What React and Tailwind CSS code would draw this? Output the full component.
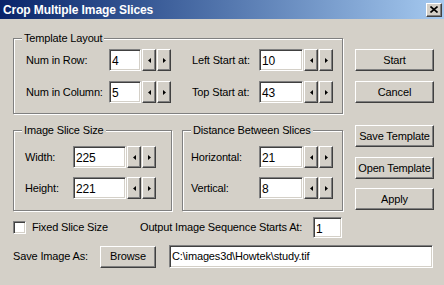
const raised =
  'bg-[#d4d0c8] border border-t-white border-l-white border-r-[#404040] border-b-[#404040] shadow-[inset_-1px_-1px_0_#808080]';
const sunken =
  'bg-white border border-t-[#808080] border-l-[#808080] border-r-white border-b-white shadow-[inset_1px_1px_0_#404040,inset_-1px_-1px_0_#d4d0c8]';

function Arrow({ dir }) {
  return (
    <svg width="3" height="5" viewBox="0 0 3 5" className="block">
      {dir === 'left' ? <polygon points="3,0 3,5 0,2.5" fill="#000" /> : <polygon points="0,0 0,5 3,2.5" fill="#000" />}
    </svg>
  );
}

function Spin({ value, w }) {
  return (
    <div className="flex h-[22px]">
      <div className={`${sunken} ${w} flex items-start pl-[2px] pt-[2px] text-[12px]`}>{value}</div>
      <button className={`${raised} ml-[1px] w-[14px] flex items-center justify-center`}>
        <Arrow dir="left" />
      </button>
      <button className={`${raised} ml-[1px] w-[14px] flex items-center justify-center`}>
        <Arrow dir="right" />
      </button>
    </div>
  );
}

function Group({ title, className, children }) {
  return (
    <div className={`relative border border-[#808080] shadow-[1px_1px_0_#fff,inset_1px_1px_0_#fff] ${className}`}>
      <span className="absolute -top-[8px] left-[8px] bg-[#d4d0c8] px-[2px] leading-[14px]">{title}</span>
      {children}
    </div>
  );
}

function Btn({ children, className = '' }) {
  return (
    <button className={`${raised} h-[22px] flex items-center justify-center ${className}`}>{children}</button>
  );
}

export default function App() {
  return (
    <div className="w-[444px] h-[285px] bg-[#d4d0c8] text-black text-[11px] tracking-[-0.15px] font-['Liberation_Sans',Arial,sans-serif] overflow-hidden">
      <div className="h-[19px] flex items-center justify-between pl-[3px] pr-[2px] bg-gradient-to-r from-[#0a246a] to-[#a6caf0]">
        <span className="text-white font-bold text-[12px] tracking-[-0.1px]">Crop Multiple Image Slices</span>
        <button className={`${raised} w-[16px] h-[14px] flex items-center justify-center`}>
          <svg width="8" height="7" viewBox="0 0 8 7">
            <path d="M0.5 0.5 L7.5 6.5 M7.5 0.5 L0.5 6.5" stroke="#000" strokeWidth="1.6" />
          </svg>
        </button>
      </div>

      <div className="pl-[13px]">
        <div className="flex">
          <div className="w-[330px]">
            <Group title="Template Layout" className="mt-[19px] pt-[10px] pb-[10px] pl-[12px]">
              <div className="flex flex-col gap-[10px]">
                <div className="flex items-center">
                  <span className="w-[83px]">Num in Row:</span>
                  <Spin value="4" w="w-[32px]" />
                  <span className="ml-[21px] w-[67px]">Left Start at:</span>
                  <Spin value="10" w="w-[44px]" />
                </div>
                <div className="flex items-center">
                  <span className="w-[83px]">Num in Column:</span>
                  <Spin value="5" w="w-[32px]" />
                  <span className="ml-[21px] w-[67px]">Top Start at:</span>
                  <Spin value="43" w="w-[44px]" />
                </div>
              </div>
            </Group>

            <div className="flex mt-[16px] gap-[10px]">
              <Group title="Image Slice Size" className="w-[159px] pt-[15px] pb-[11px] pl-[11px]">
                <div className="flex flex-col gap-[9px]">
                  <div className="flex items-center">
                    <span className="w-[48px]">Width:</span>
                    <Spin value="225" w="w-[53px]" />
                  </div>
                  <div className="flex items-center">
                    <span className="w-[48px]">Height:</span>
                    <Spin value="221" w="w-[53px]" />
                  </div>
                </div>
              </Group>
              <Group title="Distance Between Slices" className="w-[161px] pt-[15px] pb-[11px] pl-[8px]">
                <div className="flex flex-col gap-[9px]">
                  <div className="flex items-center">
                    <span className="w-[68px]">Horizontal:</span>
                    <Spin value="21" w="w-[44px]" />
                  </div>
                  <div className="flex items-center">
                    <span className="w-[68px]">Vertical:</span>
                    <Spin value="8" w="w-[44px]" />
                  </div>
                </div>
              </Group>
            </div>
          </div>

          <div className="ml-[12px] w-[79px] pt-[30px] flex flex-col">
            <Btn>Start</Btn>
            <Btn className="mt-[10px]">Cancel</Btn>
            <Btn className="mt-[22px]">Save Template</Btn>
            <Btn className="mt-[10px]">Open Template</Btn>
            <Btn className="mt-[9px]">Apply</Btn>
          </div>
        </div>

        <div className="flex items-center mt-[6px] h-[21px]">
          <div className={`${sunken} w-[13px] h-[13px]`} />
          <span className="ml-[6px] w-[108px]">Fixed Slice Size</span>
          <span className="w-[173px]">Output Image Sequence Starts At:</span>
          <div className={`${sunken} w-[29px] h-[21px] flex items-start pt-[2px] pl-[2px] text-[12px]`}>1</div>
        </div>

        <div className="flex items-center mt-[7px]">
          <span className="w-[87px]">Save Image As:</span>
          <Btn className="w-[56px] shadow-[inset_-1px_-1px_0_#808080,0_0_0_1px_#000]">Browse</Btn>
          <div className={`${sunken} ml-[13px] w-[264px] h-[23px] flex items-center pl-[2px]`}>
            {'C:\\images3d\\Howtek\\study.tif'}
          </div>
        </div>
      </div>
    </div>
  );
}
